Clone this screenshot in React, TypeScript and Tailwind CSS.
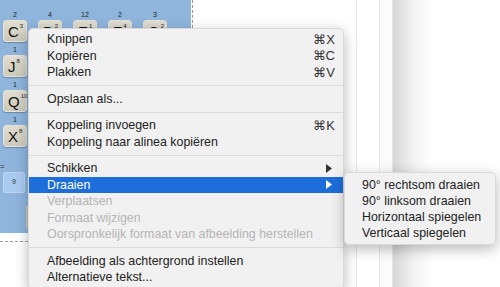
type Tile = { top: string; letter: string; sup: string };

const TOP_ROW: Tile[] = [
  { top: "2", letter: "C", sup: "3" },
  { top: "4", letter: "D", sup: "2" },
  { top: "12", letter: "E", sup: "1" },
  { top: "2", letter: "F", sup: "4" },
  { top: "3", letter: "G", sup: "2" },
];

const COLUMN: Tile[] = [
  { top: "1", letter: "J", sup: "8" },
  { top: "1", letter: "Q", sup: "10" },
  { top: "1", letter: "X", sup: "8" },
];

type Item = { label: string; shortcut?: string; sub?: boolean; disabled?: boolean; active?: boolean };

const GROUPS: Item[][] = [
  [
    { label: "Knippen", shortcut: "⌘X" },
    { label: "Kopiëren", shortcut: "⌘C" },
    { label: "Plakken", shortcut: "⌘V" },
  ],
  [{ label: "Opslaan als..." }],
  [{ label: "Koppeling invoegen", shortcut: "⌘K" }, { label: "Koppeling naar alinea kopiëren" }],
  [
    { label: "Schikken", sub: true },
    { label: "Draaien", sub: true, active: true },
    { label: "Verplaatsen", disabled: true },
    { label: "Formaat wijzigen", disabled: true },
    { label: "Oorspronkelijk formaat van afbeelding herstellen", disabled: true },
  ],
  [{ label: "Afbeelding als achtergrond instellen" }, { label: "Alternatieve tekst..." }],
];

const SUBMENU = ["90° rechtsom draaien", "90° linksom draaien", "Horizontaal spiegelen", "Verticaal spiegelen"];

function TileCell({ tile }: { tile: Tile }) {
  return (
    <div className="flex flex-col w-[24px]">
      <div className="h-[9px] text-center text-[7px] leading-[7px] text-[#222]">{tile.top}</div>
      <div className="h-[22px] rounded-[3px] border border-[#e6e3d7] bg-gradient-to-b from-[#e1ded2] to-[#cecaba] shadow-[0_1px_1px_rgba(0,0,0,0.25)] flex items-start pl-[4px] pt-[3px]">
        <span className="text-[15px] leading-[15px] text-[#111]">{tile.letter}</span>
        <span className="text-[6px] leading-[6px] text-[#222] ml-[1px] -mt-[1px]">{tile.sup}</span>
      </div>
    </div>
  );
}

function Arrow({ white }: { white?: boolean }) {
  return (
    <svg width="6" height="9" viewBox="0 0 6 9" className="shrink-0">
      <path d="M0 0 L6 4.5 L0 9 Z" fill={white ? "#ffffff" : "#333333"} />
    </svg>
  );
}

export default function App() {
  return (
    <div
      className="relative w-[500px] h-[287px] overflow-hidden bg-white text-[12.4px] text-[#222]"
      style={{ fontFamily: '"Liberation Sans", Arial, sans-serif' }}
    >
      {/* page with board */}
      <div className="w-[193px] h-[242px] border-r border-b border-dashed border-[#9a9a9a]">
        <div className="w-[191px] h-[233px] bg-[#8fb5dd] pl-[3px] pt-[11px] flex flex-col gap-[4px]">
          <div className="flex gap-[11px]">
            {TOP_ROW.map((t) => (
              <TileCell key={t.letter} tile={t} />
            ))}
          </div>
          {COLUMN.map((t) => (
            <TileCell key={t.letter} tile={t} />
          ))}
          <div className="flex flex-col mt-[12px] -ml-[3px]">
            <div className="h-[9px] text-[8px] leading-[8px] text-[#333]">=</div>
            <div className="ml-[3px] w-[22px] h-[21px] rounded-[2px] border border-[#bcd6f3] bg-[#a9cbf0] flex items-center justify-center text-[7px] text-[#333]">
              9
            </div>
          </div>
          <div className="ml-[23px] mt-[8px] w-[6px] h-[24px] rounded-[2px] bg-[#c9c7bd]" />
        </div>
      </div>

      {/* right-hand panel */}
      <div className="absolute left-[356px] top-0 h-full flex">
        <div className="w-[23px] border-l border-[#e8e8e8]" />
        <div className="w-[14px] border-x border-[#e8e8e8] bg-[#fbfbfb]" />
        <div className="w-[40px] bg-gradient-to-r from-[#d6d6d6] via-[#f2f2f2] to-white" />
      </div>

      {/* context menu */}
      <div className="absolute left-[28px] top-[28px] w-[316px] rounded-[5px] bg-[#f1f1f1] border border-[#d9d9d9] py-[2px] shadow-[0_4px_14px_rgba(0,0,0,0.28)]">
        {GROUPS.map((group, gi) => (
          <div key={gi}>
            {gi > 0 && <div className="my-[4.5px] h-px bg-[#dcdcdc]" />}
            {group.map((item) => (
              <div
                key={item.label}
                className={`h-[16.5px] flex items-center pl-[18px] pr-[11px] ${
                  item.active ? "bg-[#1d6ddb] text-white" : item.disabled ? "text-[#b4b4b4]" : "text-[#222]"
                }`}
              >
                <span className="flex-1 leading-none">{item.label}</span>
                {item.shortcut && <span className="leading-none text-[#333] -mr-[3px] text-[13px]">{item.shortcut}</span>}
                {item.sub && <Arrow white={item.active} />}
              </div>
            ))}
          </div>
        ))}
      </div>

      {/* submenu */}
      <div className="absolute left-[344px] top-[172px] w-[152px] rounded-[5px] bg-[#f1f1f1] border border-[#d9d9d9] pt-[4px] pb-[3px] shadow-[0_4px_14px_rgba(0,0,0,0.28)]">
        {SUBMENU.map((s) => (
          <div key={s} className="h-[16px] flex items-center pl-[17px] leading-none">
            {s}
          </div>
        ))}
      </div>
    </div>
  );
}
